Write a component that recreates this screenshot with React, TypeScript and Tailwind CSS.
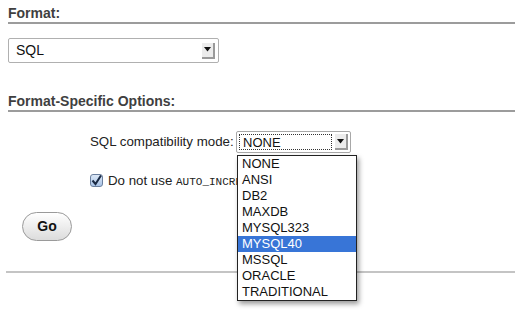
import React from "react";

const Arrow = ({ className }: { className: string }) => (
  <div className={className}>
    <svg width="7" height="5" viewBox="0 0 7 5">
      <path d="M0 0 H7 L3.5 4.5 Z" fill="#111" />
    </svg>
  </div>
);

const items = ["NONE", "ANSI", "DB2", "MAXDB", "MYSQL323", "MYSQL40", "MSSQL", "ORACLE", "TRADITIONAL"];

export default function App() {
  return (
    <div
      className="relative w-[515px] h-[333px] bg-white overflow-hidden"
      style={{ fontFamily: '"Liberation Sans", Arial, sans-serif' }}
    >
      <div className="pl-[8px] pt-[5px]">
        <div className="text-[14px] leading-[16px] font-bold text-[#3f3f3f] pb-[1px] border-b-[2px] border-[#9c9c9c]">
          Format:
        </div>
        <div className="mt-[14px] w-[211px] h-[25px] border border-[#b0b0b0] rounded-[2px] flex items-center justify-between pl-[7px] pr-[3px]">
          <span className="text-[14px] text-[#111]">SQL</span>
          <Arrow className="w-[13px] h-[16px] bg-[#ececec] border-r-[2px] border-b-[2px] border-[#9a9a9a] flex items-center justify-center" />
        </div>
        <div className="mt-[30px] text-[14px] leading-[16px] font-bold text-[#3f3f3f] pb-[1px] border-b-[2px] border-[#9c9c9c]">
          Format-Specific Options:
        </div>
      </div>
      <div className="pl-[90px] mt-[19px] flex items-center">
        <span className="text-[13.3px] text-[#222] w-[146px] whitespace-nowrap">SQL compatibility mode:</span>
        <div className="w-[115px] h-[22px] border border-[#a8a8a8] rounded-[2px] flex items-center justify-between pl-[2px] pr-[2px]">
          <div className="h-[16px] w-[93px] border border-dotted border-[#333] flex items-center pl-[3px]">
            <span className="text-[13px] text-[#111] leading-none">NONE</span>
          </div>
          <Arrow className="w-[13px] h-[16px] bg-[#ececec] border-r-[2px] border-b-[2px] border-[#9a9a9a] flex items-center justify-center" />
        </div>
      </div>
      <div className="pl-[90px] mt-[15px] flex items-center gap-[5px]">
        <div className="w-[13px] h-[13px] rounded-[3px] border border-[#6a7f9e] bg-gradient-to-b from-[#dce8f7] to-[#a9c3e6] flex items-center justify-center">
          <svg width="11" height="11" viewBox="0 0 11 11">
            <path d="M1.5 5.5 L4.5 9 L10 0.5" stroke="#1a2a44" strokeWidth="2" fill="none" />
          </svg>
        </div>
        <div className="w-[129px] overflow-hidden">
          <span className="text-[13.3px] text-[#222] whitespace-nowrap">
            Do not use{" "}
            <span className="text-[11px]" style={{ fontFamily: '"Liberation Mono", "Courier New", monospace' }}>
              AUTO_INCREMENT
            </span>
          </span>
        </div>
      </div>
      <div className="pl-[22px] mt-[20px]">
        <button className="w-[50px] h-[29px] rounded-full border border-[#9a9a9a] bg-gradient-to-b from-[#ffffff] to-[#dcdcdc] text-[14px] font-bold text-[#111]">
          Go
        </button>
      </div>
      <div className="ml-[6px] mt-[30px] border-t-[2px] border-[#c4c4c4]" />

      <div className="absolute left-[237px] top-[155px] w-[120px] bg-white border border-[#222] shadow-[2px_3px_5px_rgba(0,0,0,0.4)]">
        {items.map((it) => (
          <div
            key={it}
            className={
              it === "MYSQL40"
                ? "h-[16px] leading-[16px] pl-[4px] text-[13px] bg-[#3875d7] text-white"
                : "h-[16px] leading-[16px] pl-[4px] text-[13px] text-[#111]"
            }
          >
            {it}
          </div>
        ))}
      </div>
    </div>
  );
}
